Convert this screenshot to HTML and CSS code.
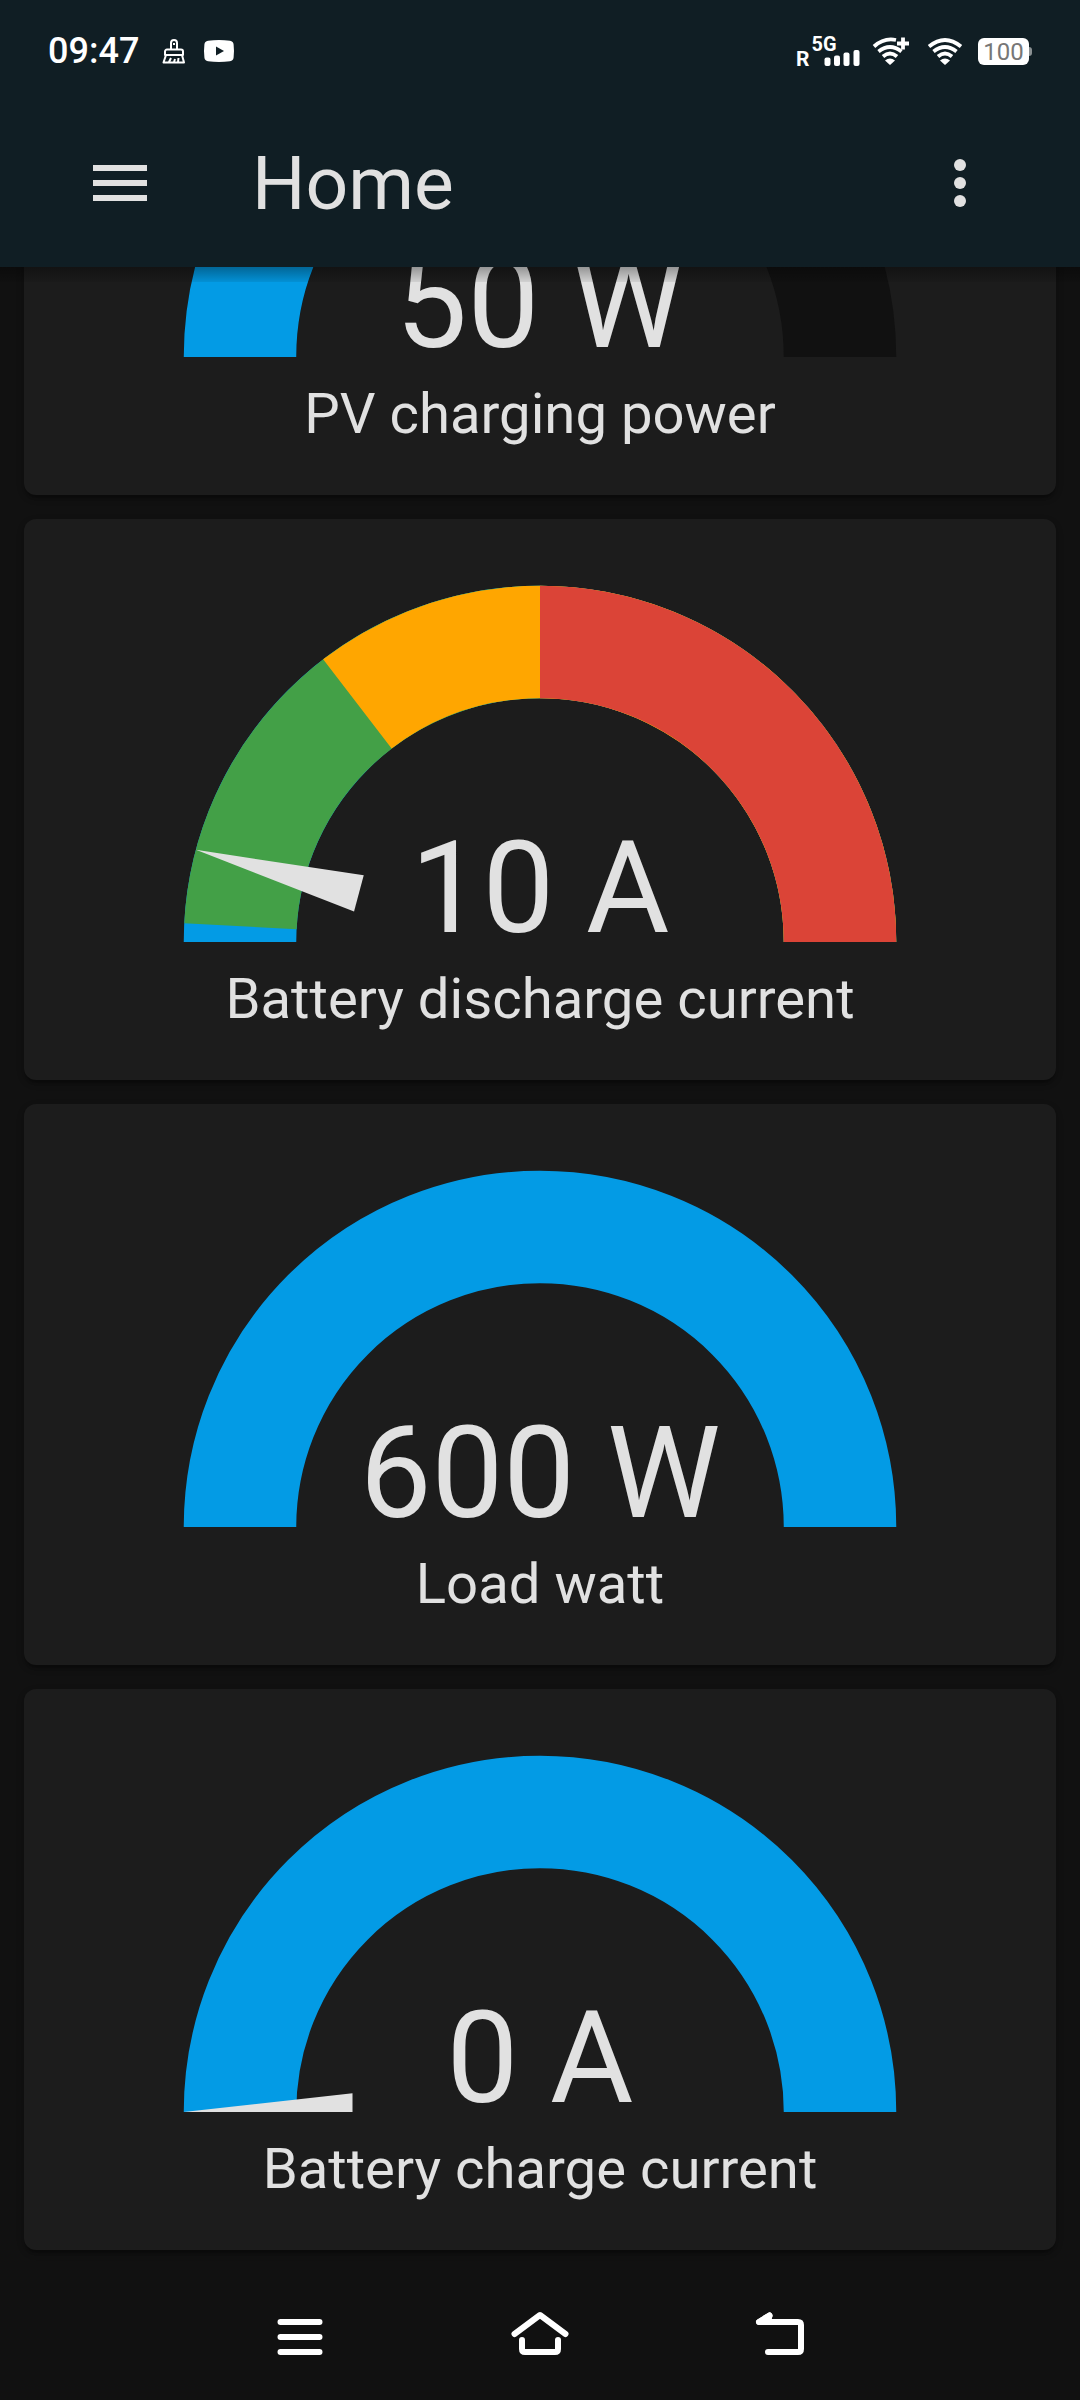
FILE: index.html
```html
<!DOCTYPE html>
<html lang="en">
<head>
    <meta charset="UTF-8">
    <title>Home</title>
    <link rel="stylesheet" href="styles.css">
</head>
<body>
    <header>
        <div class="status-bar">
            <span class="time">09:47</span>
            <svg class="brush" width="24" height="25" viewBox="0 0 24 25">
                <path d="M9 10V4a3 3 0 0 1 6 0v6M3 16v-3.500a2 2 0 0 1 2-2h14a2 2 0 0 1 2 2V16zM4 16L1.500 23.500h20.500L20 16M7 23l2-4M12 23l1-3M16 23l.5-4" />
                <path d="M12 4v2" />
            </svg>
            <svg class="youtube" width="30" height="22" viewBox="0 0 30 22">
                <path fill="#fff" d="M4 .7Q15-.6 26 .7Q29.300 1.200 29.600 4.500Q30.400 11 29.600 17.500Q29.300 20.800 26 21.300Q15 22.600 4 21.300Q.7 20.800.4 17.500Q-.4 11 .4 4.500Q.7 1.200 4 .7z" />
                <path fill="#101e24" d="M12 6.500v9l8-4.500z" />
            </svg>
            <div class="status-right">
                <svg class="signal" width="64" height="32" viewBox="0 0 64 32">
                    <text x="0" y="31" font-size="21">R</text>
                    <text x="15.500" y="16" font-size="20.500" textLength="25" lengthAdjust="spacingAndGlyphs">5G</text>
                    <rect x="28.500" y="22.500" width="6" height="8.500" rx="2" />
                    <rect x="38" y="20.500" width="6" height="10.500" rx="2" />
                    <rect x="47.500" y="17.500" width="6" height="13.500" rx="2" />
                    <rect x="57.500" y="15" width="6" height="16" rx="2" />
                </svg>
                <svg class="wifi wifi-plus" width="38" height="30" viewBox="0 0 38 30">
                    <path d="M2 10.500Q12 1.500 24 4M6.500 15.500Q18 6.500 29.500 15.500M11 20.500Q18 14.500 25 20.500" />
                    <path d="M31 1.500v12M25 7.500h12" />
                    <path class="dot" d="M13 24.500Q18 20.500 23 24.500L18 29z" />
                </svg>
                <svg class="wifi" width="36" height="30" viewBox="0 0 36 30">
                    <path d="M2 10.500Q18-2.500 34 10.500M6.500 15.500Q18 6.500 29.500 15.500M11 20.500Q18 14.500 25 20.500" />
                    <path class="dot" d="M13 24.500Q18 20.500 23 24.500L18 29z" />
                </svg>
                <div class="battery">100</div>
            </div>
        </div>
        <div class="toolbar">
            <svg width="54" height="36" viewBox="0 0 18 12">
                <path fill="#e1e1e1" d="M0 12h18v-2H0v2zm0-5h18V5H0v2zm0-7v2h18V0H0z" />
            </svg>
            <h1>Home</h1>
            <svg class="dots" width="12" height="48" viewBox="0 0 4 16">
                <g fill="#e1e1e1">
                    <circle cx="2" cy="2" r="2" />
                    <circle cx="2" cy="8" r="2" />
                    <circle cx="2" cy="14" r="2" />
                </g>
            </svg>
        </div>
    </header>

    <main>
        <div class="card">
            <svg class="gauge" viewBox="-50 -50 100 50">
                <path class="arc dial" d="M-40 0A40 40 0 0 1 40 0" />
                <path class="arc blue" d="M-40 0A40 40 0 0 1 -20 -34.641" />
                <text x="0" y="-1.37">50 W</text>
            </svg>
            <div class="name">PV charging power</div>
        </div>

        <div class="card">
            <svg class="gauge" viewBox="-50 -50 100 50">
                <path class="arc blue" d="M-40 0A40 40 0 0 1 40 0" />
                <path class="arc green" d="M-39.945 -2.093A40 40 0 0 1 40 0" />
                <path class="arc yellow" d="M-24.350 -31.734A40 40 0 0 1 40 0" />
                <path class="arc red" d="M0 -40A40 40 0 0 1 40 0" />
                <path class="needle" d="M-25 -2.500L-47.500 0L-25 2.500z" transform="rotate(15)" />
                <text x="0" y="-1.37">10 A</text>
            </svg>
            <div class="name">Battery discharge current</div>
        </div>

        <div class="card">
            <svg class="gauge" viewBox="-50 -50 100 50">
                <path class="arc blue" d="M-40 0A40 40 0 0 1 40 0" />
                <text x="0" y="-1.37">600 W</text>
            </svg>
            <div class="name">Load watt</div>
        </div>

        <div class="card">
            <svg class="gauge" viewBox="-50 -50 100 50">
                <path class="arc blue" d="M-40 0A40 40 0 0 1 40 0" />
                <path class="needle" d="M-25 -2.500L-47.500 0H-25z" />
                <text x="0" y="-1.37">0 A</text>
            </svg>
            <div class="name">Battery charge current</div>
        </div>
    </main>

    <nav>
        <svg width="60" height="48" viewBox="0 0 60 48">
            <path d="M10.500 9h39M10.500 24h39M10.500 39h39" />
        </svg>
        <svg width="60" height="48" viewBox="0 0 60 48">
            <path d="M4.500 21L30 2L55.500 21M12 27v9q0 3 3 3h30q3 0 3-3v-9" />
        </svg>
        <svg width="60" height="48" viewBox="0 0 60 48">
            <path d="M19.500 2.500L9 9H48q3 0 3 3v24q0 3-3 3H18" />
            <path fill="#fff" d="M9 9l10.500-6.500L18 9z" />
        </svg>
    </nav>
</body>
</html>
```

FILE: styles.css
```css
* {
    box-sizing: border-box;
}

body {
    margin: 0;
    height: 2400px;
    display: flex;
    flex-direction: column;
    font-family: Roboto, "Liberation Sans", sans-serif;
    background-color: #111111;
    color: #e1e1e1;
    overflow: hidden;
}

svg {
    display: block;
    flex: none;
    overflow: visible;
}

header {
    position: relative;
    z-index: 1;
    flex: none;
    height: 267px;
    background-color: #101e24;
}

/* shadow under the header */
header::after {
    content: "";
    position: absolute;
    top: 100%;
    left: 0;
    right: 0;
    height: 15px;
    background: linear-gradient(rgba(0, 0, 0, 0.34), rgba(0, 0, 0, 0.07));
}

.status-bar {
    height: 99px;
    padding: 3px 48px 0 48px;
    display: flex;
    align-items: center;
    color: white;
}

.time {
    font-size: 36px;
    font-weight: 500;
    width: 114px;
}

.brush {
    fill: none;
    stroke: white;
    stroke-width: 2;
    stroke-linejoin: round;
}

.youtube {
    margin-left: 18px;
}

.status-right {
    margin-left: auto;
    display: flex;
    align-items: center;
}

.signal {
    fill: white;
    font-weight: 700;
}

.wifi {
    margin-left: 17px;
    fill: none;
    stroke: white;
    stroke-width: 3.8;
}

.wifi-plus {
    margin-left: 12px;
}

.wifi .dot {
    fill: white;
    stroke: none;
}

.battery {
    position: relative;
    width: 51px;
    height: 27px;
    margin-left: 15px;
    margin-right: 3px;
    border-radius: 6px;
    background-color: white;
    color: #777;
    font-size: 24px;
    line-height: 28px;
    text-align: center;
}

.battery::after {
    content: "";
    position: absolute;
    left: 51px;
    top: 9px;
    width: 3px;
    height: 9px;
    border-radius: 0 3px 3px 0;
    background-color: #8b9193;
}

.toolbar {
    height: 168px;
    padding: 0 114px 0 93px;
    display: flex;
    align-items: center;
}

h1 {
    margin: 0 0 0 105px;
    font-size: 75px;
    font-weight: 400;
}

.dots {
    margin-left: auto;
}

main {
    flex: 1;
    min-height: 0;
    padding: 0 24px 24px;
    display: flex;
    flex-direction: column;
    justify-content: flex-end;
    gap: 24px;
    overflow: hidden;
}

.card {
    flex: none;
    height: 561px;
    padding-top: 48px;
    display: flex;
    flex-direction: column;
    align-items: center;
    background-color: #1c1c1c;
    border-radius: 12px;
    box-shadow: 0 6px 3px -3px rgba(0, 0, 0, 0.2), 0 3px 3px 0 rgba(0, 0, 0, 0.14), 0 3px 9px 0 rgba(0, 0, 0, 0.12);
}

.gauge {
    width: 750px;
    height: 375px;
}

.gauge text {
    font-size: 17.05px;
    text-anchor: middle;
    fill: #e1e1e1;
}

.arc {
    fill: none;
    stroke-width: 15;
}

.dial {
    stroke: #111111;
}

.blue {
    stroke: #039be5;
}

.green {
    stroke: #43a047;
}

.yellow {
    stroke: #ffa600;
}

.red {
    stroke: #db4437;
}

.needle {
    fill: #e1e1e1;
}

.name {
    margin-top: 24px;
    font-size: 56.25px;
    line-height: 66px;
}

nav {
    flex: none;
    height: 126px;
    display: flex;
    align-items: center;
    justify-content: center;
    gap: 180px;
}

nav svg {
    fill: none;
    stroke: white;
    stroke-width: 6;
    stroke-linecap: round;
    stroke-linejoin: round;
}
```
